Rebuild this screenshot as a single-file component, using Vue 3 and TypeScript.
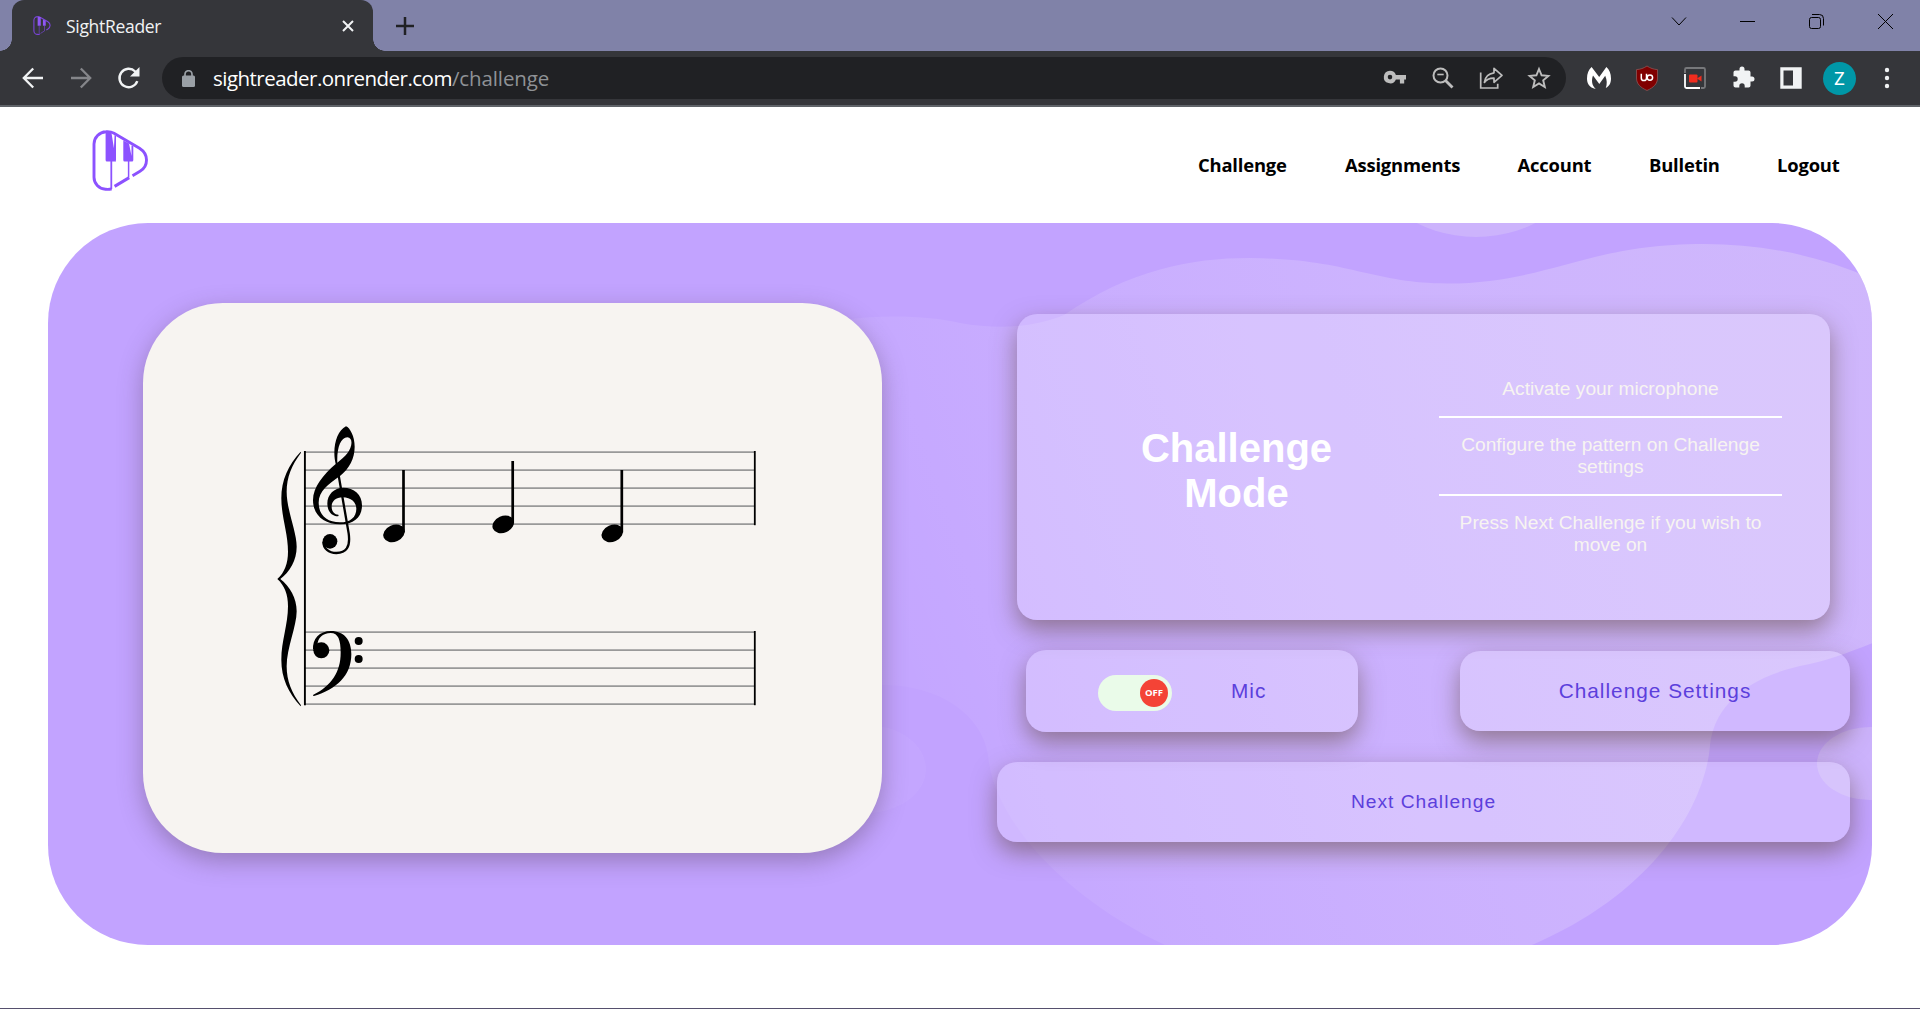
<script setup lang="ts">
import { ref } from 'vue'

interface NoteGlyph {
  x: number
  y: number
}

const navItems: string[] = ['Challenge', 'Assignments', 'Account', 'Bulletin', 'Logout']

const steps: string[] = [
  'Activate your microphone',
  'Configure the pattern on Challenge settings',
  'Press Next Challenge if you wish to move on',
]

// Staff geometry, in sheet-card pixels
const staffTops: number[] = [149, 329]
const staffOffsets: number[] = [0, 18, 36, 54, 72]
const notes: NoteGlyph[] = [
  { x: 251, y: 230.3 },
  { x: 360.2, y: 221.3 },
  { x: 469.3, y: 230.3 },
]

const micOn = ref<boolean>(false)
</script>

<template>
  <div class="window">
    <div class="titlebar">
      <div class="tab">
        <svg class="favicon" viewBox="0 0 56 61">
          <path d="M20.500 59 Q17 59.500 14 59 A12 12 0 0 1 2 47 V14 A12 12 0 0 1 14 2 Q18 1.500 22 4 L47 18.500 Q54 23 54 30 Q54 37 47 42 L42 45" fill="none" stroke="#7b45dc" stroke-width="3.500" />
          <path d="M14 3h10v28H14z M31 11l9 4v16h-9z" fill="#8f57f5" />
          <path d="M19 30v28 M36 30v18 L23 56" fill="none" stroke="#7b45dc" stroke-width="2" />
        </svg>
        <span class="tab-title">SightReader</span>
        <svg class="tab-close" viewBox="0 0 12 12"><path d="M1 1l10 10M11 1L1 11" stroke="#f1f3f4" stroke-width="2" /></svg>
        <span class="tab-foot left"></span>
        <span class="tab-foot right"></span>
      </div>
      <svg class="new-tab" viewBox="0 0 18 18"><path d="M9 0v18M0 9h18" stroke="#202124" stroke-width="2.500" /></svg>
      <div class="win-controls">
        <svg width="17" height="17" viewBox="0 0 17 17"><path d="M2 4.500l7 7.500 7-7.500" /></svg>
        <svg width="17" height="17" viewBox="0 0 17 17"><path d="M1 8.500h15" /></svg>
        <svg width="17" height="17" viewBox="0 0 17 17"><rect x="1.500" y="4.500" width="11" height="11" rx="2" /><path d="M4 1.500h7.500a4 4 0 0 1 4 4V12.500" /></svg>
        <svg width="17" height="17" viewBox="0 0 17 17"><path d="M1 1l15 15M16 1L1 16" /></svg>
      </div>
    </div>

    <div class="toolbar">
      <svg class="nav-icon" viewBox="0 0 24 24"><path d="M22 12H3.500M12.200 2.500L2.800 12l9.400 9.500" stroke="#f1f3f4" stroke-width="2.300" fill="none" /></svg>
      <svg class="nav-icon" viewBox="0 0 24 24"><path d="M2 12h18.500M11.800 2.500l9.400 9.500-9.400 9.500" stroke="#85868a" stroke-width="2.300" fill="none" /></svg>
      <svg class="nav-icon" viewBox="0 0 24 24"><path d="M20.300 15.200A9.200 9.200 0 1 1 18.200 5.500L21 8.300" stroke="#f1f3f4" stroke-width="2.400" fill="none" /><path d="M22.500 1v9.500H13z" fill="#f1f3f4" /></svg>
      <div class="omnibox">
        <svg class="lock" viewBox="0 0 13 17"><rect x="0" y="5.500" width="13" height="11.500" rx="1.500" fill="#9aa0a6" /><path d="M3 6.500V4.200a3.500 3.500 0 0 1 7 0v2.300" stroke="#9aa0a6" stroke-width="1.700" fill="none" /></svg>
        <span class="url-host">sightreader.onrender.com</span><span class="url-path">/challenge</span>
        <div class="omni-actions">
          <svg width="24" height="24" viewBox="0 0 24 24"><path fill-rule="evenodd" d="M7 5.500a6.300 6.300 0 0 1 5.900 4.200H23v4.600h-1.800v4h-4.300v-4h-4A6.300 6.300 0 1 1 7 5.500zm0 4.100a2.300 2.300 0 1 0 0 4.600 2.300 2.300 0 0 0 0-4.600z" fill="#bdbdbd" transform="translate(0 -.8)" /></svg>
          <svg width="24" height="24" viewBox="0 0 24 24" fill="none" stroke="#bdbdbd"><circle cx="9.500" cy="9.500" r="7" stroke-width="2" /><path d="M14.500 14.500l7 7" stroke-width="2.800" /><path d="M6.300 8.500h6.400" stroke-width="1.600" /></svg>
          <svg width="24" height="24" viewBox="0 0 24 24" fill="none" stroke="#bdbdbd" stroke-width="1.700"><path d="M1.700 6.500v15.500h17v-4.200" /><path d="M15 2.300l8 7-8 7v-4.100c-4.500-.1-7.500 1.300-9.600 4.200.6-5.200 4-8.800 9.600-9.600z" stroke-linejoin="round" /></svg>
          <svg width="24" height="24" viewBox="0 0 24 24"><path d="M12 3l2.600 6.300 6.800.6-5.200 4.400 1.600 6.700-5.800-3.600L6.200 21l1.600-6.700-5.200-4.400 6.800-.6z" fill="none" stroke="#bdbdbd" stroke-width="1.900" /></svg>
        </div>
      </div>
      <div class="extensions">
        <svg width="24" height="24" viewBox="0 0 24 24"><path d="M8.700 23C2 21.500 0 17.500 0 12.500 0 7.500 1.500 4 4.600 1l7.600 10L19.400 1C22.500 4 24 7.500 24 12.500c0 4.500-1.500 7.500-5.200 9.500 1.300-3.500 1.400-8-.6-12.200L12.300 18 6 9.600C4.200 14 4.800 19.800 8.700 23z" fill="#fff" /></svg>
        <svg width="24" height="26" viewBox="0 0 24 26"><path d="M12 1c3.500 2.300 6.500 3.300 10.500 3.600V13c0 6-4 9.500-10.500 12.500C5.500 22.500 1.500 19 1.500 13V4.600C5.500 4.300 8.500 3.300 12 1z" fill="#800000" stroke="#8d5555" stroke-width=".8" /><path d="M6.300 8.800v4.200a2.600 2.600 0 0 0 5.200 0V8.800" fill="none" stroke="#fff" stroke-width="1.500" /><circle cx="14.900" cy="12.600" r="2.700" fill="none" stroke="#fff" stroke-width="1.500" /></svg>
        <svg width="24" height="24" viewBox="0 0 24 24"><path d="M2 7V3.500A1.500 1.500 0 0 1 3.500 2h17A1.500 1.500 0 0 1 22 3.500v17a1.500 1.500 0 0 1-1.500 1.500H18" fill="none" stroke="#77787b" stroke-width="1.800" /><path d="M2 8v12.500A1.500 1.500 0 0 0 3.500 22H17" fill="none" stroke="#fff" stroke-width="1.800" /><rect x="6" y="8.500" width="8.500" height="8" rx="1" fill="#f12c1e" /><path d="M14 12.500l4.500-3v6z" fill="#f12c1e" /></svg>
        <svg width="24" height="24" viewBox="0 0 24 24"><path d="M20.500 11H19V7c0-1.100-.9-2-2-2h-4V3.500a2.500 2.500 0 0 0-5 0V5H4c-1.100 0-2 .9-2 2v3.800h1.500a2.700 2.700 0 0 1 0 5.400H2V20c0 1.100.9 2 2 2h3.800v-1.500a2.700 2.700 0 0 1 5.400 0V22H17c1.100 0 2-.9 2-2v-4h1.500a2.500 2.500 0 0 0 0-5z" fill="#f1f3f4" transform="translate(.5 -.5)" /></svg>
        <svg width="24" height="24" viewBox="0 0 24 24"><path fill-rule="evenodd" d="M1.300 1.300h21.400v21.400H1.300zM4.500 4.500v15H14v-15z" fill="#f1f3f4" /></svg>
        <span class="avatar">Z</span>
        <svg width="24" height="24" viewBox="0 0 24 24" fill="#f1f3f4"><circle cx="11" cy="4" r="2.200" /><circle cx="11" cy="12" r="2.200" /><circle cx="11" cy="20" r="2.200" /></svg>
      </div>
    </div>

    <main class="page">
      <header class="site-header">
        <svg class="logo" viewBox="0 0 56 61">
          <path d="M19.600 58.800 Q17 59.600 13.500 59.200 A12 12 0 0 1 2 47 V14 A12.500 12.500 0 0 1 14 1.700 Q18.500 1.300 22 3.300 L47.500 18.300 Q54.500 22.800 54.500 30 Q54.500 37.500 48 41.300 L40.500 45.700" fill="none" stroke="#8c52ff" stroke-width="2.900" />
          <path d="M13.600 3 H19.500 L24 31.500 H15 Q13.600 31.500 13.600 30z M19.500 3 L21.600 24 L22.600 5 L24 6 V30 Q24 31.500 22.500 31.500 H18z" fill="#8c52ff" />
          <path d="M31.300 10.500 L37 13.500 L39.500 26 V15.500 L41.300 16 V30 Q41.300 31.500 40 31.500 H32.600 Q31.300 31.500 31.300 30z" fill="#8c52ff" />
          <path d="M19.300 31 V59" fill="none" stroke="#8c52ff" stroke-width="1.800" />
          <path d="M36.600 31 V47.500" fill="none" stroke="#8c52ff" stroke-width="1.500" />
          <path d="M37.200 47.600 L22.600 56.400" fill="none" stroke="#8c52ff" stroke-width="3" />
        </svg>
        <nav class="site-nav">
          <a v-for="item in navItems" :key="item">{{ item }}</a>
        </nav>
      </header>

      <section class="hero">
        <svg class="hero-art" viewBox="48 223 1824 722" preserveAspectRatio="none">
          <defs>
            <linearGradient id="wave" gradientUnits="userSpaceOnUse" x1="880" y1="640" x2="1860" y2="300">
              <stop offset="0" stop-color="#fff" stop-opacity=".03" />
              <stop offset="1" stop-color="#e2d4f7" stop-opacity=".4" />
            </linearGradient>
          </defs>
          <path fill="url(#wave)" d="M800 330 C850 313 920 314 960 323 C1000 330 1035 327 1064 315 C1130 270 1190 258 1250 258 C1350 259 1370 283 1447 283.500 C1550 283 1585 244 1704 244 C1765 244 1822 256 1880 282 V640 C1850 652 1830 660 1800 666 C1740 680 1714 710 1710 745 C1706 800 1660 890 1532 945 H1165 C1080 905 995 830 988 755 C982 715 940 685 882 685 H800z" />
          <ellipse cx="1476" cy="152" rx="108" ry="85" fill="#e2d4f7" fill-opacity=".33" />
          <ellipse cx="1870" cy="763.500" rx="53" ry="36.500" fill="#e2d4f7" fill-opacity=".33" />
          <ellipse cx="866" cy="769" rx="60" ry="44" fill="#fff" fill-opacity=".045" />
        </svg>

        <div class="sheet">
          <svg width="739" height="550" viewBox="0 0 739 550">
            <g v-for="top in staffTops" :key="top">
              <path v-for="o in staffOffsets" :key="o" :d="`M161 ${top + o + 0.1}H612`" stroke="#999" stroke-width="1.900" />
              <path :d="`M611.800 ${top - 1}V${top + 73.200}`" stroke="#000" stroke-width="1.800" />
            </g>
            <path d="M161.900 148V402.300" stroke="#000" stroke-width="1.900" />
            <g v-for="n in notes" :key="n.x">
              <ellipse :cx="n.x" :cy="n.y" rx="11.200" ry="8.300" :transform="`rotate(-24 ${n.x} ${n.y})`" />
              <path :d="`M${n.x + 9.500} ${n.y - 63.300}V${n.y - 1}`" stroke="#000" stroke-width="2.700" />
            </g>
            <g transform="translate(117 97) scale(.33333)">
              <path d="M122 155 C85 195 64 240 64 295 C64 350 84 400 84 455 C84 490 74 517 52 537 L60 538 C90 515 110 480 110 440 C110 395 80 330 80 275 C80 232 95 195 123 158z" />
              <path transform="matrix(1 0 0 -1 0 1074)" d="M122 155 C85 195 64 240 64 295 C64 350 84 400 84 455 C84 490 74 517 52 537 L60 538 C90 515 110 480 110 440 C110 395 80 330 80 275 C80 232 95 195 123 158z" />
              <path fill-rule="evenodd" d="M258 79 C236 90 223 122 223 158 C223 172 225 182 227 192 C190 224 159 262 159 300 C159 345 192 373 240 373 C284 373 306 350 306 316 C306 283 282 263 250 263 C222 263 202 284 202 310 C202 335 216 349 234 349 Q237 347 235 344 C223 344 215 334 215 320 C215 303 228 292 248 292 C273 292 289 307 289 326 C289 352 270 367 240 367 C200 367 176 345 176 308 C176 273 205 253 240 228 C268 205 284 175 284 140 C284 110 270 83 258 79z M232 188 C230 145 242 112 262 112 C281 114 276 142 262 160 C254 170 244 179 232 188z" />
              <path d="M236 226 L266 400 C272 442 258 459 229 459 C206 459 190 445 190 425" fill="none" stroke="#000" stroke-width="7" />
              <circle cx="210" cy="424" r="22" />
              <path d="M159 750 C157 716 178 693 213 693 C252 693 274 720 274 762 C274 828 228 868 162 888 Q157 888 160 884 C215 857 242 815 242 758 C242 720 235 699 212 699 C188 699 172 715 173 735z" />
              <circle cx="184" cy="751" r="24" />
              <circle cx="296" cy="723" r="12" />
              <circle cx="296" cy="777" r="12" />
            </g>
          </svg>
        </div>

        <div class="panel">
          <div class="glass intro">
            <h1>Challenge Mode</h1>
            <ul>
              <li v-for="step in steps" :key="step">{{ step }}</li>
            </ul>
          </div>
          <div class="controls">
            <div class="glass mic">
              <button class="toggle" :class="{ on: micOn }" @click="micOn = !micOn"><span>{{ micOn ? 'ON' : 'OFF' }}</span></button>
              <span>Mic</span>
            </div>
            <div class="glass settings">Challenge Settings</div>
          </div>
          <div class="glass next">Next Challenge</div>
        </div>
      </section>
    </main>
  </div>
</template>

<style>
body {
  margin: 0;
  overflow: hidden;
}
</style>

<style scoped>
* {
  box-sizing: border-box;
}

.window {
  width: 1920px;
  height: 1009px;
  display: flex;
  flex-direction: column;
  background: #fff;
  border-bottom: 1px solid #56506e;
  font-family: "Liberation Sans", Arial, sans-serif;
}

.titlebar {
  height: 51px;
  display: flex;
  align-items: center;
  background: #8082a8;
  padding-left: 12px;
}

.tab {
  position: relative;
  width: 361px;
  height: 51px;
  display: flex;
  align-items: center;
  padding: 0 19px 0 21px;
  background: #35363a;
  border-radius: 12px 12px 0 0;
}

.tab-foot {
  position: absolute;
  bottom: 0;
  width: 12px;
  height: 12px;
}

.tab-foot.left {
  left: -12px;
  background: radial-gradient(circle at 0 0, transparent 11.5px, #35363a 12px);
}

.tab-foot.right {
  right: -12px;
  background: radial-gradient(circle at 100% 0, transparent 11.5px, #35363a 12px);
}

.favicon {
  width: 18px;
  height: 19px;
}

.tab-title {
  margin-left: 15px;
  flex: 1;
  font: 17.5px "Open Sans", sans-serif;
  letter-spacing: -0.3px;
  color: #f1f3f4;
}

.tab-close {
  width: 12px;
  height: 12px;
}

.new-tab {
  width: 18px;
  height: 18px;
  margin-left: 23px;
}

.win-controls {
  margin-left: auto;
  margin-right: 26px;
  margin-top: -8px;
  display: flex;
  gap: 52px;
  fill: none;
  stroke: #000;
  stroke-width: 1;
}

.toolbar {
  height: 56px;
  display: flex;
  align-items: center;
  padding-left: 21px;
  background: #35363a;
  border-bottom: 2px solid #5f6368;
}

.nav-icon {
  width: 24px;
  height: 24px;
  margin-right: 24px;
}

.nav-icon:nth-child(3) {
  margin-right: 21px;
}

.omnibox {
  width: 1404px;
  height: 42px;
  display: flex;
  align-items: center;
  padding-left: 20px;
  border-radius: 21px;
  background: #202124;
  font: 20.5px "Open Sans", sans-serif;
}

.lock {
  width: 13px;
  height: 17px;
  margin-right: 18px;
}

.url-host {
  color: #fff;
  letter-spacing: -0.52px;
}

.url-path {
  color: #8f9296;
  letter-spacing: -0.1px;
}

.omni-actions {
  margin-left: auto;
  margin-right: 15px;
  display: flex;
  gap: 24px;
}

.extensions {
  margin-left: 21px;
  display: flex;
  align-items: center;
  gap: 24px;
}

.avatar {
  width: 33px;
  height: 33px;
  margin: 0 -4px;
  border-radius: 50%;
  background: #0097a7;
  color: #fff;
  font: 18px/34px Roboto, sans-serif;
  text-align: center;
}

.page {
  flex: 1;
}

.site-header {
  height: 116px;
  display: flex;
  align-items: center;
  justify-content: space-between;
  padding: 0 77px 0 92px;
}

.logo {
  width: 56px;
  height: 61px;
  margin-top: -9px;
}

.site-nav {
  display: grid;
  grid-template-columns: 147px 172.5px 131.5px 128px 66px;
  font: bold 18.4px/26px "Open Sans", sans-serif;
  letter-spacing: -0.18px;
  color: #000;
}

.hero {
  position: relative;
  width: 1824px;
  height: 722px;
  margin: 0 48px;
  padding: 80px 0 0 95px;
  display: flex;
  align-items: flex-start;
  border-radius: 100px;
  overflow: hidden;
  background: #c2a3ff;
}

.hero-art {
  position: absolute;
  inset: 0;
  width: 100%;
  height: 100%;
}

.sheet {
  position: relative;
  width: 739px;
  height: 550px;
  border-radius: 80px;
  background: #f7f4f1;
  box-shadow: 0 8px 24px rgba(68, 50, 60, 0.35);
}

.sheet svg {
  display: block;
}

.panel {
  position: relative;
  width: 853px;
  margin: 11px 0 0 115px;
}

.glass {
  border-radius: 20px;
  background: rgba(255, 255, 255, 0.23);
  box-shadow: 0 10px 24px rgba(90, 66, 50, 0.52);
}

.intro {
  width: 813px;
  height: 306px;
  margin-left: 20px;
  display: flex;
  align-items: center;
}

h1 {
  width: 279px;
  margin: 7px 0 0 80px;
  font-size: 40px;
  line-height: 45px;
  text-align: center;
  color: #fff;
}

ul {
  width: 343px;
  align-self: flex-start;
  margin: 48px 0 0 63px;
  padding: 0;
  list-style: none;
  font-size: 19.2px;
  line-height: 22px;
  text-align: center;
  color: #f7f4f1;
}

li {
  padding: 16px 20px;
}

li + li {
  border-top: 2px solid #fff;
}

.controls {
  display: flex;
  align-items: center;
  justify-content: space-between;
  margin: 30px 0;
  padding-left: 29px;
}

.mic,
.settings,
.next {
  height: 80px;
  display: flex;
  align-items: center;
  justify-content: center;
  font-size: 20.8px;
  line-height: 24px;
  letter-spacing: 1px;
  color: #5c3fdc;
}

.mic {
  width: 332px;
  height: 82px;
  justify-content: flex-start;
  padding-left: 72px;
}

.toggle {
  width: 74px;
  height: 36px;
  margin: 4px 59px 0 0;
  padding: 4px;
  display: flex;
  justify-content: flex-end;
  border: 0;
  border-radius: 18px;
  background: #eafbe9;
}

.toggle.on {
  justify-content: flex-start;
}

.toggle span {
  width: 28px;
  height: 28px;
  border-radius: 50%;
  background: #f44336;
  color: #fff;
  font: bold 9.6px/27px "Open Sans", Arial, sans-serif;
  text-align: center;
}

.settings {
  width: 390px;
}

.next {
  font-size: 19.2px;
}
</style>
